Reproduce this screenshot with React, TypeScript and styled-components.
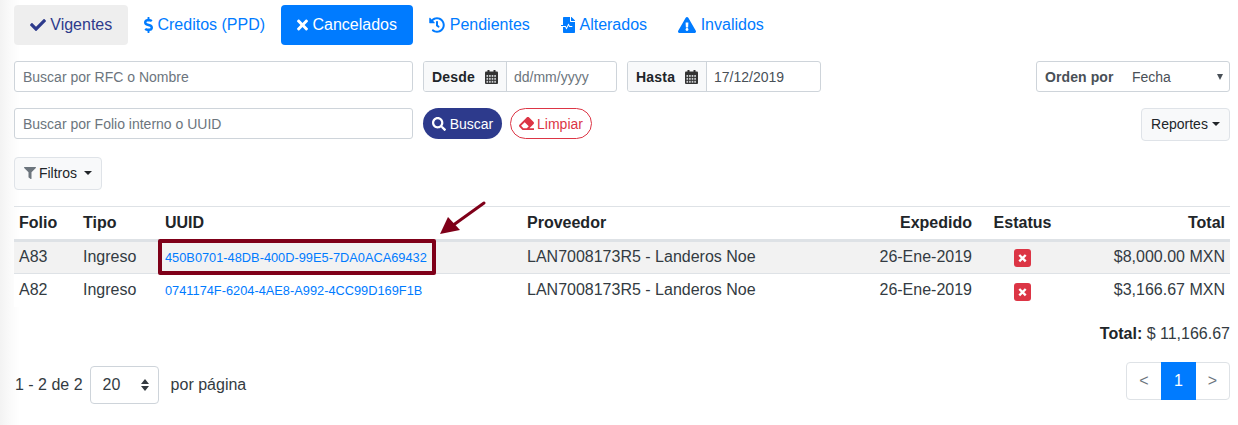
import React from 'react'
import styled, { createGlobalStyle } from 'styled-components'
import {
  FaCheck,
  FaDollarSign,
  FaEraser,
  FaExclamationTriangle,
  FaFileMedicalAlt,
  FaFilter,
  FaHistory,
  FaSearch,
  FaTimes,
} from 'react-icons/fa'

const GlobalStyle = createGlobalStyle`
  html, body {
    margin: 0;
    background: #fff;
    font-family: "Liberation Sans", Arial, sans-serif;
    font-size: 16px;
    color: #212529;
  }
  * { box-sizing: border-box; }
`

const Page = styled.div`
  position: relative;
  width: 1238px;
  height: 425px;
  overflow: hidden;
  padding: 5px 8px 0 14px;
  background: linear-gradient(90deg, #f3f3f3 0, #fafafa 10px, #fff 20px);
`

const Tabs = styled.nav`
  display: flex;
  height: 40px;
`

const Tab = styled.a<{ $state?: 'muted' | 'active'; $width: number }>`
  display: flex;
  align-items: center;
  justify-content: center;
  gap: 4.5px;
  width: ${p => p.$width}px;
  height: 40px;
  border-radius: 4px;
  line-height: 1;
  background: ${p =>
    p.$state === 'muted' ? '#eeeeee' : p.$state === 'active' ? '#007bff' : 'transparent'};
  color: ${p =>
    p.$state === 'muted' ? '#2d3a8c' : p.$state === 'active' ? '#fff' : '#007bff'};
`

// the glyphs are not all 1em wide, so each one gets its real width
const TabIcon = styled.span<{ $width: number }>`
  display: flex;
  justify-content: center;
  flex: none;
  width: ${p => p.$width}px;

  svg {
    flex: none;
    width: ${p => p.$width}px;
    height: 16px;
  }
`

const FormRow = styled.div<{ $top: number }>`
  display: flex;
  align-items: flex-start;
  margin-top: ${p => p.$top}px;
  height: 31px;
`

const TextInput = styled.div`
  display: flex;
  align-items: center;
  width: 399px;
  height: 31px;
  padding: 0 8px;
  border: 1px solid #ced4da;
  border-radius: 3px;
  font-size: 14px;
  color: #6c757d;
  background: #fff;
`

const DateGroup = styled.div<{ $left: number; $labelWidth: number; $width: number }>`
  display: grid;
  grid-template-columns: ${p => p.$labelWidth}px 1fr;
  width: ${p => p.$width}px;
  height: 31px;
  margin-left: ${p => p.$left}px;
  border: 1px solid #ced4da;
  border-radius: 3px;
  overflow: hidden;
`

const DateLabel = styled.div`
  display: flex;
  align-items: center;
  justify-content: space-between;
  padding: 0 8px;
  background: #f8f9fa;
  border-right: 1px solid #ced4da;
  font-size: 14px;
  font-weight: 700;
  letter-spacing: 0.2px;
`

const CalendarIcon = styled.svg`
  width: 13px;
  height: 14px;
`

const DateValue = styled.div<{ $empty?: boolean }>`
  display: flex;
  align-items: center;
  padding-left: 7px;
  font-size: 14px;
  color: ${p => (p.$empty ? '#6c757d' : '#495057')};
`

const OrderBox = styled.div`
  display: flex;
  align-items: center;
  width: 194px;
  height: 31px;
  margin-left: auto;
  padding: 0 8px;
  border: 1px solid #ced4da;
  border-radius: 3px;
  font-size: 14px;
  color: #495057;

  b {
    width: 87px;
    letter-spacing: 0.1px;
  }

  i {
    margin-left: auto;
    margin-right: -2px;
    font-style: normal;
    border-top: 6px solid #495057;
    border-left: 3.5px solid transparent;
    border-right: 3.5px solid transparent;
  }
`

const SearchButton = styled.button`
  display: flex;
  align-items: center;
  justify-content: center;
  gap: 4px;
  width: 79px;
  height: 31px;
  margin-left: 10px;
  padding: 0;
  border: none;
  border-radius: 16px;
  background: #2d3a8c;
  color: #fff;
  font: 14px "Liberation Sans", Arial, sans-serif;
`

const ClearButton = styled.button`
  display: flex;
  align-items: center;
  justify-content: center;
  gap: 3px;
  width: 82px;
  height: 31px;
  margin-left: 8px;
  padding: 0;
  border: 1px solid #dc3545;
  border-radius: 16px;
  background: #fff;
  color: #dc3545;
  font: 14px "Liberation Sans", Arial, sans-serif;

  svg {
    font-size: 15px;
  }
`

const LightButton = styled.button<{ $width: number; $right?: boolean; $height: number }>`
  display: flex;
  align-items: center;
  justify-content: center;
  flex: none;
  width: ${p => p.$width}px;
  height: ${p => p.$height}px;
  margin-left: ${p => (p.$right ? 'auto' : 0)};
  padding: 0 0 1px;
  border: 1px solid #dfe3e8;
  border-radius: 4px;
  background: #f8f9fa;
  color: #212529;
  font: 14px "Liberation Sans", Arial, sans-serif;
`

const Caret = styled.span<{ $gap: number }>`
  margin-left: ${p => p.$gap}px;
  border-top: 4px solid #212529;
  border-left: 4px solid transparent;
  border-right: 4px solid transparent;
`

const FilterIcon = styled(FaFilter)`
  margin-right: 3px;
  font-size: 12px;
  color: #6c757d;
`

const FilterRow = styled.div`
  display: flex;
  margin-top: 18px;
`

const Table = styled.table`
  width: 1216px;
  margin-top: 16px;
  border-collapse: collapse;
  table-layout: fixed;
  border-top: 1px solid #dee2e6;
`

const Th = styled.th<{ $align?: string }>`
  height: 34px;
  padding: 0 5px;
  text-align: ${p => p.$align || 'left'};
  font-weight: 700;
  font-size: 16px;
  border-bottom: 3px solid #dee2e6;
`

const Row = styled.tr<{ $shaded?: boolean }>`
  background: ${p => (p.$shaded ? '#f2f2f2' : '#fff')};
`

const Td = styled.td<{ $align?: string }>`
  height: 33px;
  padding: 0 5px 2px;
  text-align: ${p => p.$align || 'left'};
  border-bottom: 1px solid #dee2e6;
  color: #333b42;
  white-space: nowrap;

  tr:last-child > & {
    border-bottom: 0;
    padding-bottom: 0;
  }
`

const UuidLink = styled.a`
  font-size: 12.8px;
  color: #007bff;
`

const StatusIcon = styled.svg`
  display: block;
  width: 17px;
  height: 18px;
  margin: 3px auto 0;
`

const GrandTotal = styled.div`
  margin-top: 17px;
  text-align: right;
  line-height: 20px;
  color: #333b42;

  b {
    color: #212529;
  }
`

const Footer = styled.div`
  display: flex;
  align-items: flex-start;
  justify-content: space-between;
  margin-top: 18px;
`

const PerPage = styled.div`
  display: flex;
  align-items: center;
  margin-top: 4px;
  padding-left: 1px;
  color: #333b42;
`

const PageSelect = styled.div`
  display: flex;
  align-items: center;
  justify-content: space-between;
  width: 69px;
  height: 38px;
  margin: 0 12px 0 7px;
  padding: 0 9px 0 12px;
  border: 1px solid #ced4da;
  border-radius: 4px;
`

const Stepper = styled.svg`
  width: 8px;
  height: 12px;
  fill: #343a40;
`

const Pager = styled.div`
  display: grid;
  grid-template-columns: 34px 35px 33px;
  width: 104px;
  height: 38px;
  border: 1px solid #dee2e6;
  border-radius: 4px;
`

const PagerCell = styled.div<{ $active?: boolean }>`
  display: flex;
  align-items: center;
  justify-content: center;
  margin: -1px 0;
  background: ${p => (p.$active ? '#007bff' : 'transparent')};
  color: ${p => (p.$active ? '#fff' : '#6c757d')};
  font-size: 16px;
`

// annotation drawn on top of the screenshot
const Highlight = styled.div`
  position: absolute;
  left: 158px;
  top: 239px;
  width: 278px;
  height: 36px;
  border: 4px solid #7f0019;
  border-radius: 2px;
`

const ArrowMark = styled.svg`
  position: absolute;
  left: 430px;
  top: 195px;
  width: 60px;
  height: 45px;
`

const rows = [
  { folio: 'A83', uuid: '450B0701-48DB-400D-99E5-7DA0ACA69432', total: '$8,000.00 MXN' },
  { folio: 'A82', uuid: '0741174F-6204-4AE8-A992-4CC99D169F1B', total: '$3,166.67 MXN' },
]

function Calendar() {
  const cells = []
  for (let row = 0; row < 3; row++) {
    for (let col = 0; col < 4; col++) {
      cells.push(<rect key={`${row}-${col}`} x={1.5 + col * 2.6} y={5 + row * 2.9} width={1.6} height={1.9} fill="#cfd2d4" />)
    }
  }
  return (
    <CalendarIcon viewBox="0 0 13 14">
      <rect y="1.5" width="13" height="12.5" rx="1" fill="#333" />
      <rect x="2.5" width="2" height="3" fill="#333" />
      <rect x="8.5" width="2" height="3" fill="#333" />
      {cells}
    </CalendarIcon>
  )
}

function App() {
  return (
    <Page>
      <GlobalStyle />
      <Tabs>
        <Tab $state="muted" $width={114}><TabIcon $width={16}><FaCheck /></TabIcon>Vigentes</Tab>
        <Tab $width={153}><TabIcon $width={9}><FaDollarSign /></TabIcon>Creditos (PPD)</Tab>
        <Tab $state="active" $width={132}><TabIcon $width={11}><FaTimes /></TabIcon>Cancelados</Tab>
        <Tab $width={133}><TabIcon $width={16}><FaHistory /></TabIcon>Pendientes</Tab>
        <Tab $width={116}><TabIcon $width={14}><FaFileMedicalAlt /></TabIcon>Alterados</Tab>
        <Tab $width={118}><TabIcon $width={18}><FaExclamationTriangle /></TabIcon>Invalidos</Tab>
      </Tabs>

      <FormRow $top={16}>
        <TextInput>Buscar por RFC o Nombre</TextInput>
        <DateGroup $left={10} $labelWidth={83} $width={194}>
          <DateLabel>Desde <Calendar /></DateLabel>
          <DateValue $empty>dd/mm/yyyy</DateValue>
        </DateGroup>
        <DateGroup $left={10} $labelWidth={79} $width={194}>
          <DateLabel>Hasta <Calendar /></DateLabel>
          <DateValue>17/12/2019</DateValue>
        </DateGroup>
        <OrderBox>
          <b>Orden por</b>
          Fecha
          <i />
        </OrderBox>
      </FormRow>

      <FormRow $top={16}>
        <TextInput>Buscar por Folio interno o UUID</TextInput>
        <SearchButton><FaSearch />Buscar</SearchButton>
        <ClearButton><FaEraser />Limpiar</ClearButton>
        <LightButton $right $width={89} $height={33}>
          Reportes<Caret $gap={4} />
        </LightButton>
      </FormRow>

      <FilterRow>
        <LightButton $width={88} $height={33}>
          <FilterIcon />Filtros<Caret $gap={7} />
        </LightButton>
      </FilterRow>

      <Table>
        <colgroup>
          <col width={64} />
          <col width={82} />
          <col width={362} />
          <col width={338} />
          <col width={117} />
          <col width={91} />
          <col width={162} />
        </colgroup>
        <thead>
          <tr>
            <Th>Folio</Th>
            <Th>Tipo</Th>
            <Th>UUID</Th>
            <Th>Proveedor</Th>
            <Th $align="right">Expedido</Th>
            <Th $align="center">Estatus</Th>
            <Th $align="right">Total</Th>
          </tr>
        </thead>
        <tbody>
          {rows.map((r, i) => (
            <Row key={r.folio} $shaded={i === 0}>
              <Td>{r.folio}</Td>
              <Td>Ingreso</Td>
              <Td><UuidLink>{r.uuid}</UuidLink></Td>
              <Td>LAN7008173R5 - Landeros Noe</Td>
              <Td $align="right">26-Ene-2019</Td>
              <Td $align="center">
                <StatusIcon viewBox="0 0 17 18">
                  <rect width="17" height="18" rx="3" fill="#dc3545" />
                  <path d="M5.3 6 11.7 12.4M11.7 6 5.3 12.4" stroke="#fff" strokeWidth="2.4" />
                </StatusIcon>
              </Td>
              <Td $align="right">{r.total}</Td>
            </Row>
          ))}
        </tbody>
      </Table>

      <GrandTotal><b>Total:</b> $ 11,166.67</GrandTotal>

      <Footer>
        <PerPage>
          1 - 2 de 2
          <PageSelect>
            20
            <Stepper viewBox="0 0 8 12">
              <path d="M4 0 8 5H0zM4 12 0 7h8z" />
            </Stepper>
          </PageSelect>
          por página
        </PerPage>
        <Pager>
          <PagerCell>&lt;</PagerCell>
          <PagerCell $active>1</PagerCell>
          <PagerCell>&gt;</PagerCell>
        </Pager>
      </Footer>

      <Highlight />
      <ArrowMark viewBox="0 0 60 45">
        <path d="M54 8 22 31" stroke="#7f0019" strokeWidth="3" strokeLinecap="round" />
        <path d="M10 39 18 22 30 35z" fill="#7f0019" />
      </ArrowMark>
    </Page>
  )
}

export default App
